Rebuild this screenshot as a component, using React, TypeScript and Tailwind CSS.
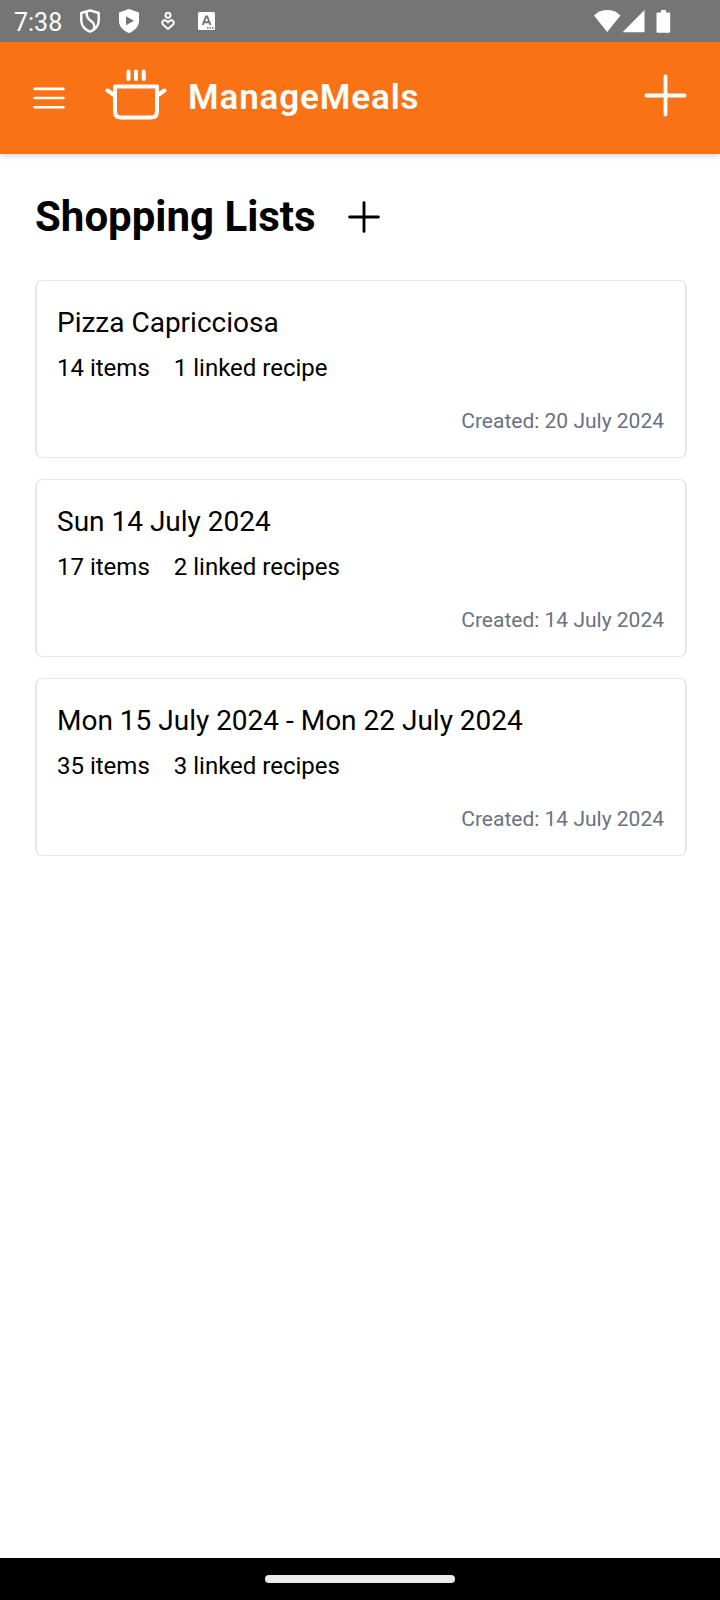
import type { ReactNode } from "react";

type ShoppingList = {
  title: string;
  items: string;
  recipes: string;
  created: string;
};

const lists: ShoppingList[] = [
  { title: "Pizza Capricciosa", items: "14 items", recipes: "1 linked recipe", created: "20 July 2024" },
  { title: "Sun 14 July 2024", items: "17 items", recipes: "2 linked recipes", created: "14 July 2024" },
  { title: "Mon 15 July 2024 - Mon 22 July 2024", items: "35 items", recipes: "3 linked recipes", created: "14 July 2024" },
];

function StrokeIcon({ className, children }: { className: string; children: ReactNode }) {
  return (
    <svg
      aria-hidden="true"
      viewBox="0 0 24 24"
      className={className}
      fill="none"
      stroke="currentColor"
      strokeWidth="1.5"
      strokeLinecap="round"
      strokeLinejoin="round"
    >
      {children}
    </svg>
  );
}

function StatusBar() {
  return (
    <div className="flex h-[42px] shrink-0 items-center justify-between bg-[#757575] pr-12 pl-3.5 text-white">
      <div className="flex items-center">
        <span className="pt-1 text-[25px] leading-8">7:38</span>
        <svg aria-hidden="true" viewBox="0 0 20 24" className="ml-[18px] h-6 w-5" fill="none" stroke="currentColor" strokeWidth="2.4" strokeLinejoin="round">
          <path d="M10 1.300 18.700 4v7.500c0 5-3.500 9-8.700 11.200C4.800 20.500 1.300 16.500 1.300 11.500V4Z" />
          <path d="M7 2.500C5.800 7.500 7.500 9.800 11 12c3.300 2.200 4.200 4.800 2.600 8.500" />
        </svg>
        <svg aria-hidden="true" viewBox="0 0 20 24" className="ml-[19px] h-6 w-5" fill="currentColor">
          <path fillRule="evenodd" d="M10 0 20 3.500V12c0 5.500-4.500 10-10 12C4.500 22 0 17.500 0 12V3.500ZM7 7.200v9l8-4.500Z" />
        </svg>
        <svg aria-hidden="true" viewBox="0 0 14 20" className="ml-[22px] h-5 w-3.5" fill="none" stroke="currentColor" strokeWidth="2">
          <circle cx="7" cy="4.200" r="2.500" />
          <path d="M7 18 2.200 13.800C.4 12 1.300 9.200 3.800 9.200c1.600 0 2.400 1 3.200 2.200.8-1.200 1.600-2.200 3.200-2.200 2.500 0 3.400 2.800 1.600 4.600Z" strokeLinejoin="round" />
        </svg>
        <svg aria-hidden="true" viewBox="0 0 17 18" className="ml-[23px] h-[18px] w-[17px]">
          <rect width="17" height="18" rx="1.500" fill="#fff" />
          <path d="m4.700 13 3.300-8.500h1.200L12.500 13M6 10.300h5" fill="none" stroke="#757575" strokeWidth="1.900" />
          <path d="M9 16h1.500m1 0H13m1 0h1.500" stroke="#757575" strokeWidth="1.300" />
        </svg>
      </div>
      <svg aria-hidden="true" viewBox="0 0 78 24" className="h-6 w-[78px]" fill="currentColor">
        <path d="M0 6.500C7.500-.7 19-.7 26.500 6.500L13.200 23Z" />
        <path d="M28.500 23.300 50.500 1v22.300Z" />
        <path d="M67 1h5v2.500h3.200q1 0 1 1v18.300q0 1-1 1H63.500q-1 0-1-1V4.500q0-1 1-1H67Z" />
      </svg>
    </div>
  );
}

function PotLogo() {
  return (
    <svg
      aria-hidden="true"
      viewBox="0 0 62 52"
      className="h-[52px] w-[62px]"
      fill="none"
      stroke="currentColor"
      strokeWidth="4"
      strokeLinecap="round"
      strokeLinejoin="round"
    >
      <path d="M23.500 3.500v7.500M31 3.500v7.500M38.700 3.500v7.500" />
      <path d="M10 18.500h42V43.500q0 6-6 6H16q-6 0-6-6ZM2.500 22.500 9 27M59.500 22.500 53 27" />
    </svg>
  );
}

function Header() {
  return (
    <header className="flex h-28 shrink-0 items-center bg-[#f97316] pr-6 pl-7 text-white shadow-md">
      <button type="button" aria-label="Open menu">
        <StrokeIcon className="size-[42px]">
          <path d="M3.750 6.750h16.500M3.750 12h16.500M3.750 17.250h16.500" />
        </StrokeIcon>
      </button>
      <a href="#home" className="ml-[35px] flex items-center gap-[21px]">
        <span className="-mt-2"><PotLogo /></span>
        <span className="text-[35px] leading-[42px] font-semibold tracking-wide">ManageMeals</span>
      </a>
      <button type="button" aria-label="Add new" className="mb-1.5 ml-auto">
        <StrokeIcon className="size-[61px]">
          <path d="M12 4.500v15M4.500 12h15" />
        </StrokeIcon>
      </button>
    </header>
  );
}

function ListCard({ list }: { list: ShoppingList }) {
  return (
    <li>
      <a href="#list" className="block rounded-[7px] border-x-2 border-y border-[#e7e7ec] py-[21px] pr-[21px] pl-5">
        <h2 className="text-[28px] leading-[42px]">{list.title}</h2>
        <p className="mt-1 flex gap-6 text-2xl leading-10">
          <span>{list.items}</span>
          <span>{list.recipes}</span>
        </p>
        <p className="mt-[18px] text-right text-[21px] leading-[30px] text-gray-500">Created: {list.created}</p>
      </a>
    </li>
  );
}

export default function App() {
  return (
    <div className="flex min-h-screen flex-col bg-white font-[Roboto,sans-serif] text-black">
      <StatusBar />
      <Header />
      <main className="flex-1 pt-[35px] pr-[33px] pl-[35px]">
        <div className="flex items-center gap-[25px]">
          <h1 className="text-[42px] leading-[56px] font-bold">Shopping Lists</h1>
          <button type="button" aria-label="Add shopping list">
            <StrokeIcon className="size-[46px]">
              <path d="M12 4.500v15M4.500 12h15" />
            </StrokeIcon>
          </button>
        </div>
        <ul className="mt-[35px] flex flex-col gap-[21px]">
          {lists.map((list) => (
            <ListCard key={list.title} list={list} />
          ))}
        </ul>
      </main>
      <div className="flex h-[42px] shrink-0 items-center justify-center bg-black">
        <div className="h-2 w-[190px] rounded-full bg-[#ebebeb]" />
      </div>
    </div>
  );
}
